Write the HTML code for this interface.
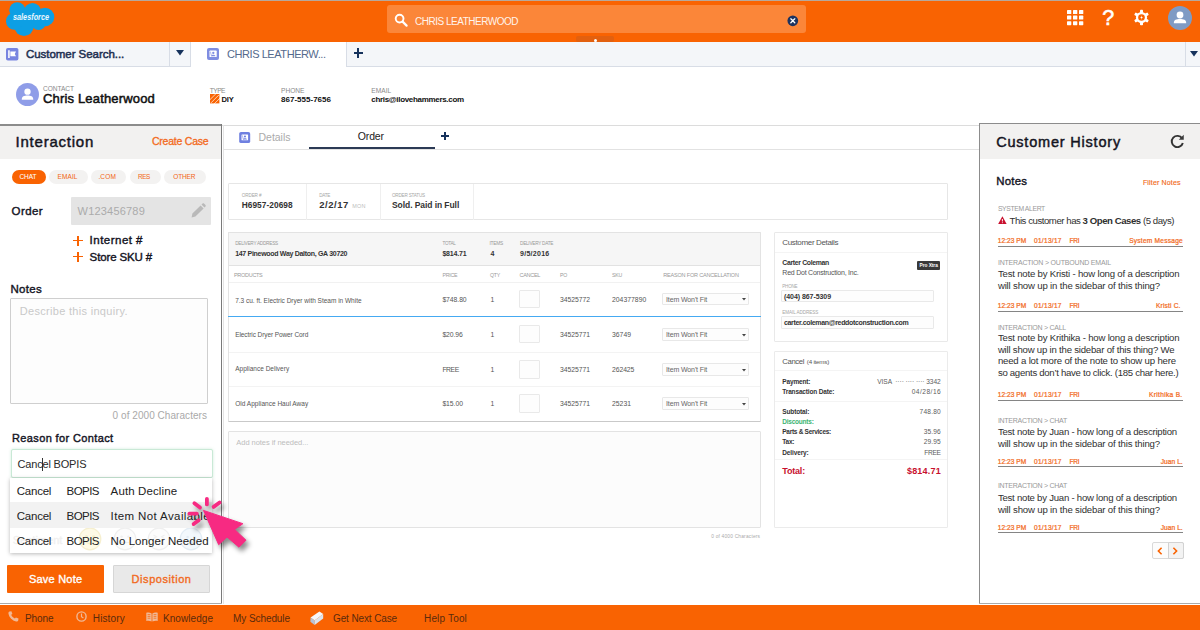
<!DOCTYPE html>
<html lang="en"><head><meta charset="utf-8"><title>Service Console - Chris Leatherwood</title>
<style>
html,body{margin:0;padding:0}
body{width:1200px;height:630px;overflow:hidden;background:#fff;position:relative;font-family:"Liberation Sans", sans-serif;}
.b{position:absolute;box-sizing:border-box}
.t{position:absolute;white-space:pre;line-height:1;font-family:"Liberation Sans", sans-serif;}
svg{position:absolute;overflow:visible}
</style></head><body>
<div class="b" style="left:0px;top:0px;width:1200px;height:42px;background:#f96302;"></div>
<div class="b" style="left:0px;top:0px;width:1200px;height:1px;background:#b7a89c;"></div>
<div class="b" style="left:387px;top:5px;width:419px;height:28px;background:#fb8639;border-radius:3px;"></div>
<div class="b" style="left:576px;top:36.2px;width:37.5px;height:6px;background:#e2600f;border-radius:2px;"></div>
<div class="b" style="left:594.2px;top:39.4px;width:2.6px;height:2.2px;background:#fff;border-radius:2px;"></div>
<svg style="left:394px;top:13px" width="14" height="14" viewBox="0 0 14 14"><circle cx="5.6" cy="5.6" r="3.9" fill="none" stroke="#fff" stroke-width="1.9"/><path d="M8.6 8.6 L12.6 12.6" stroke="#fff" stroke-width="2.2" stroke-linecap="round"/></svg>
<svg style="left:786.6px;top:14.6px" width="11.6" height="11.6" viewBox="0 0 13 13"><circle cx="6.5" cy="6.5" r="6" fill="#1d3360"/><path d="M4.3 4.3 L8.7 8.7 M8.7 4.3 L4.3 8.7" stroke="#fff" stroke-width="1.5" stroke-linecap="round"/></svg>
<svg style="left:0;top:0" width="60" height="40" viewBox="0 0 60 40"><g fill="#0d9fe4"><circle cx="17.3" cy="10.2" r="8"/><circle cx="32.5" cy="11.6" r="8.6"/><circle cx="45" cy="17" r="9.3"/><circle cx="38.5" cy="22.5" r="7.6"/><circle cx="24" cy="26.4" r="9.6"/><circle cx="14.6" cy="21.2" r="8.6"/><rect x="14" y="10" width="30" height="16"/></g><text x="13" y="20.4" font-family="Liberation Sans, sans-serif" font-size="8.6" font-style="italic" font-weight="700" fill="#eaf7ff" textLength="36" lengthAdjust="spacingAndGlyphs">salesforce</text></svg>
<svg style="left:1067px;top:10px" width="16" height="16" viewBox="0 0 16 16" fill="#fff"><rect x="0" y="0.0" width="4.3" height="4" rx="0.6"/><rect x="6" y="0.0" width="4.3" height="4" rx="0.6"/><rect x="12" y="0.0" width="4.3" height="4" rx="0.6"/><rect x="0" y="5.6" width="4.3" height="4" rx="0.6"/><rect x="6" y="5.6" width="4.3" height="4" rx="0.6"/><rect x="12" y="5.6" width="4.3" height="4" rx="0.6"/><rect x="0" y="11.2" width="4.3" height="4" rx="0.6"/><rect x="6" y="11.2" width="4.3" height="4" rx="0.6"/><rect x="12" y="11.2" width="4.3" height="4" rx="0.6"/></svg>
<svg style="left:1133.5px;top:10px" width="15" height="15" viewBox="0 0 15 15"><g fill="#fff"><rect x="6" y="-0.2" width="3" height="4" rx="0.8" transform="rotate(0 7.5 7.5)"/><rect x="6" y="-0.2" width="3" height="4" rx="0.8" transform="rotate(60 7.5 7.5)"/><rect x="6" y="-0.2" width="3" height="4" rx="0.8" transform="rotate(120 7.5 7.5)"/><rect x="6" y="-0.2" width="3" height="4" rx="0.8" transform="rotate(180 7.5 7.5)"/><rect x="6" y="-0.2" width="3" height="4" rx="0.8" transform="rotate(240 7.5 7.5)"/><rect x="6" y="-0.2" width="3" height="4" rx="0.8" transform="rotate(300 7.5 7.5)"/><circle cx="7.5" cy="7.5" r="5.6"/></g><circle cx="7.5" cy="7.5" r="3.3" fill="#f96302"/><path d="M8 5.2 L6.3 7.9 L7.5 7.9 L7 9.9 L8.8 7 L7.6 7 Z" fill="#fff"/></svg>
<svg style="left:1168px;top:5.5px" width="24" height="24" viewBox="0 0 24 24"><circle cx="12" cy="12" r="12" fill="#7f9bc4"/><circle cx="12" cy="9" r="3.4" fill="#fff"/><path d="M5.8 17.2 C5.8 13.6 8.4 12.9 12 12.9 C15.6 12.9 18.2 13.6 18.2 17.2 Z" fill="#fff"/></svg>
<div class="b" style="left:0px;top:42px;width:1200px;height:25px;background:#f4f6f9;"></div>
<div class="b" style="left:0px;top:66px;width:1200px;height:1px;background:#d8dde6;"></div>
<div class="b" style="left:168.5px;top:42px;width:1px;height:25px;background:#d8dde6;"></div>
<div class="b" style="left:190px;top:42px;width:1px;height:25px;background:#d8dde6;"></div>
<div class="b" style="left:191px;top:42px;width:155px;height:25px;background:#fff;"></div>
<div class="b" style="left:346px;top:42px;width:1px;height:25px;background:#d8dde6;"></div>
<div class="b" style="left:1184.5px;top:42px;width:1px;height:25px;background:#d8dde6;"></div>
<svg style="left:6.2px;top:48.3px" width="12.4" height="12.4" viewBox="0 0 12 12"><rect width="12" height="12" rx="1.8" fill="#7884e0"/><path d="M2.1 2.3 H3.6 V9.6 H2.1 Z M4.2 3.4 H9.7 L8.5 5.75 L9.7 8.1 H4.2 Z" fill="#fff"/></svg>
<svg style="left:176px;top:50px" width="8" height="6" viewBox="0 0 8 6"><path d="M0 0 H8 L4 5.6 Z" fill="#16325c"/></svg>
<svg style="left:1190px;top:51px" width="8" height="6" viewBox="0 0 8 6"><path d="M0 0 H8 L4 5.4 Z" fill="#16325c"/></svg>
<svg style="left:207px;top:48px" width="12" height="12" viewBox="0 0 12 12"><rect width="12" height="12" rx="2" fill="#7f8de1"/><rect x="2.5" y="2.6" width="7.2" height="6.5" rx="0.7" fill="#fff"/><circle cx="6.3" cy="4.9" r="1.15" fill="#7f8de1"/><path d="M4.2 8.3 C4.2 6.3 8.4 6.3 8.4 8.3 Z" fill="#7f8de1"/><path d="M3.4 3.6 L4.6 8.3" stroke="#7f8de1" stroke-width=".6"/></svg>
<div class="b" style="left:353.5px;top:52px;width:9.5px;height:2.4px;background:#16325c;"></div>
<div class="b" style="left:357.1px;top:48.4px;width:2.4px;height:9.5px;background:#16325c;"></div>
<svg style="left:16px;top:82.5px" width="23" height="23" viewBox="0 0 24 24"><circle cx="12" cy="12" r="12" fill="#8f9de8"/><circle cx="12" cy="9" r="3.3" fill="#fff"/><path d="M6 17.4 C6 13.8 8.6 13.1 12 13.1 C15.4 13.1 18 13.8 18 17.4 Z" fill="#fff"/></svg>
<svg style="left:210px;top:94.4px" width="9.4" height="9.4" viewBox="0 0 10 10"><rect width="10" height="10" fill="#f96302"/><path d="M-1 7 L7 -1 M1 9.5 L9.5 1 M4 11 L11 4" stroke="#fff" stroke-width="1" opacity=".75"/></svg>
<div class="b" style="left:0px;top:124px;width:222px;height:480px;background:#fff;"></div>
<div class="b" style="left:0px;top:124px;width:222px;height:35px;background:#f2f1f0;"></div>
<div class="b" style="left:0px;top:124px;width:222px;height:1.5px;background:#8c8c8c;"></div>
<div class="b" style="left:220.8px;top:124px;width:1.3px;height:480px;background:#7a7a7a;"></div>
<div class="b" style="left:222px;top:124.5px;width:757px;height:1px;background:#dcdcdc;"></div>
<div class="b" style="left:222.5px;top:125px;width:1px;height:479px;background:#e4e4e4;"></div>
<div class="b" style="left:223px;top:148.5px;width:756px;height:1px;background:#e2e2e2;"></div>
<div class="b" style="left:978.5px;top:123px;width:222px;height:481px;background:#fff;"></div>
<div class="b" style="left:978.5px;top:123px;width:222px;height:36px;background:#f2f1f0;"></div>
<div class="b" style="left:978.5px;top:123px;width:222px;height:1.3px;background:#8c8c8c;"></div>
<div class="b" style="left:978.5px;top:123px;width:1.2px;height:481px;background:#8c8c8c;"></div>
<div class="b" style="left:978.5px;top:603px;width:222px;height:1px;background:#aaa;"></div>
<div class="b" style="left:0px;top:603px;width:222px;height:1px;background:#aaa;"></div>
<div class="b" style="left:0px;top:604.8px;width:1200px;height:26px;background:#f96302;"></div>
<svg style="left:8px;top:611px" width="11" height="11" viewBox="0 0 11 11"><path d="M1.6 0.6 L3.4 0.3 L4.4 2.9 L3.2 3.8 C3.8 5.3 5.3 6.9 6.9 7.6 L7.9 6.4 L10.5 7.5 L10.2 9.4 C9.9 10.3 9 10.6 8.1 10.4 C4.2 9.5 1.2 6.4 0.5 2.7 C0.3 1.8 0.7 0.9 1.6 0.6 Z" fill="#f0b896"/></svg>
<svg style="left:76px;top:611px" width="11" height="11" viewBox="0 0 11 11"><circle cx="5.5" cy="5.5" r="4.6" fill="none" stroke="#f0b896" stroke-width="1.4"/><path d="M5.5 2.6 V5.7 L7.4 7" fill="none" stroke="#f0b896" stroke-width="1.2"/></svg>
<svg style="left:146px;top:612px" width="12" height="10" viewBox="0 0 12 10"><path d="M0.3 0.8 C2 0.2 4 0.4 5.6 1.4 V9.4 C4 8.6 2 8.4 0.3 8.9 Z M11.7 0.8 C10 0.2 8 0.4 6.4 1.4 V9.4 C8 8.6 10 8.4 11.7 8.9 Z" fill="#f0b896"/><path d="M1.6 2.6 H4.4 M1.6 4.4 H4.4 M1.6 6.2 H4.4 M7.6 2.6 H10.4 M7.6 4.4 H10.4 M7.6 6.2 H10.4" stroke="#f96302" stroke-width=".7"/></svg>
<svg style="left:309px;top:610px" width="16" height="16" viewBox="309 610 16 16"><path d="M310.6 617.6 L319.4 611.4 L323.2 614 L314.6 620.6 Z" fill="#f6f7f9"/><path d="M310.6 617.6 L314.6 620.6 L314.6 625 L310.4 621.8 Z" fill="#b5c3d4"/><path d="M314.6 620.6 L323.2 614 L323.2 618.4 L314.6 625 Z" fill="#dde4ec"/></svg>
<div class="b" style="left:11.6px;top:169.5px;width:34.4px;height:14.6px;background:#f96302;border-radius:8px;"></div>
<div class="b" style="left:49px;top:169.5px;width:39px;height:14.6px;background:#f3f2f1;border-radius:8px;"></div>
<div class="b" style="left:91.4px;top:169.5px;width:34.19999999999999px;height:14.6px;background:#f3f2f1;border-radius:8px;"></div>
<div class="b" style="left:129.6px;top:169.5px;width:31.400000000000006px;height:14.6px;background:#f3f2f1;border-radius:8px;"></div>
<div class="b" style="left:164.4px;top:169.5px;width:41.599999999999994px;height:14.6px;background:#f3f2f1;border-radius:8px;"></div>
<div class="b" style="left:71px;top:197px;width:139.5px;height:28px;background:#e4e4e4;border-radius:1px;"></div>
<svg style="left:191px;top:203px" width="15" height="15" viewBox="0 0 15 15"><path d="M0.6 14.4 L1.4 10.6 L9.6 2.4 L12.6 5.4 L4.4 13.6 Z M10.5 1.5 L11.6 0.5 C12 0.1 12.6 0.1 13 0.5 L14.5 2 C14.9 2.4 14.9 3 14.5 3.4 L13.5 4.5 Z" fill="#b9b9b9"/></svg>
<div class="b" style="left:73px;top:239.79999999999998px;width:10px;height:1.6px;background:#f96302;"></div>
<div class="b" style="left:77.2px;top:235.6px;width:1.6px;height:10px;background:#f96302;"></div>
<div class="b" style="left:73px;top:255.8px;width:10px;height:1.6px;background:#f96302;"></div>
<div class="b" style="left:77.2px;top:251.60000000000002px;width:1.6px;height:10px;background:#f96302;"></div>
<div class="b" style="left:10.2px;top:298px;width:198px;height:105.5px;background:#fdfdfd;border:1px solid #cfcfcf;border-radius:1px;"></div>
<div class="b" style="left:10.8px;top:449.4px;width:202.2px;height:28.4px;background:#fff;border:1px solid #c9e9d6;border-radius:2px;box-shadow:0 0 3px rgba(120,200,150,.35);"></div>
<div class="b" style="left:42px;top:457.5px;width:1px;height:13px;background:#333;"></div>
<div class="b" style="left:10.2px;top:477.8px;width:202.3px;height:75px;background:#fff;box-shadow:0 1px 4px rgba(0,0,0,.28);"></div>
<svg style="left:77.8px;top:526.5px" width="24" height="24" viewBox="0 0 24 24"><circle cx="12" cy="12" r="10.8" fill="#fefae6" stroke="#f6efcf" stroke-width="1.2"/><circle cx="8.4" cy="9.5" r="1.6" fill="#f6efcf"/><circle cx="15.6" cy="9.5" r="1.6" fill="#f6efcf"/><path d="M7 14 Q12 19 17 14" fill="none" stroke="#f6efcf" stroke-width="1.2"/></svg>
<svg style="left:112.7px;top:526.5px" width="24" height="24" viewBox="0 0 24 24"><circle cx="12" cy="12" r="10.8" fill="#fcfcfc" stroke="#efefef" stroke-width="1.2"/><circle cx="8.6" cy="9.6" r="1.2" fill="#efefef"/><circle cx="15.4" cy="9.6" r="1.2" fill="#efefef"/><path d="M8 15.5 H16" stroke="#efefef" stroke-width="1.2"/></svg>
<svg style="left:146.6px;top:526.5px" width="24" height="24" viewBox="0 0 24 24"><circle cx="12" cy="12" r="10.8" fill="#fcfcfc" stroke="#efefef" stroke-width="1.2"/><path d="M6.5 8 L9.5 9.8 L6.5 11.4 M17.5 8 L14.5 9.8 L17.5 11.4 M8 16.5 Q12 13.5 16 16.5" fill="none" stroke="#efefef" stroke-width="1.1"/></svg>
<svg style="left:178.7px;top:526.5px" width="24" height="24" viewBox="0 0 24 24"><circle cx="12" cy="12" r="10.8" fill="#f3f8fc" stroke="#e3ecf4" stroke-width="1.2"/><circle cx="8.6" cy="10" r="1.3" fill="#e3ecf4"/><circle cx="15.4" cy="10" r="1.3" fill="#e3ecf4"/><ellipse cx="12" cy="16" rx="2.2" ry="2.6" fill="#e3ecf4"/></svg>
<div class="b" style="left:10.2px;top:501.5px;width:202.3px;height:26px;background:#f2f2f2;"></div>
<div class="b" style="left:7.3px;top:564.6px;width:97.1px;height:28.6px;background:#f96302;border-radius:1px;"></div>
<div class="b" style="left:112.7px;top:564.6px;width:97.1px;height:28.6px;background:#e9e9e9;border:1px solid #d6d6d6;border-radius:1px;"></div>
<svg style="left:238.7px;top:131.8px" width="11.4" height="11" viewBox="0 0 12 12"><rect width="12" height="12" rx="2" fill="#6f80e0"/><rect x="2.5" y="2.6" width="7.2" height="6.5" rx="0.7" fill="#fff"/><circle cx="6.3" cy="4.9" r="1.15" fill="#6f80e0"/><path d="M4.2 8.3 C4.2 6.3 8.4 6.3 8.4 8.3 Z" fill="#6f80e0"/><path d="M3.4 3.6 L4.6 8.3" stroke="#6f80e0" stroke-width=".6"/></svg>
<div class="b" style="left:308.7px;top:147.2px;width:126px;height:2.1px;background:#2b3a55;"></div>
<div class="b" style="left:440.5px;top:135px;width:8.6px;height:2.2px;background:#16325c;"></div>
<div class="b" style="left:443.7px;top:131.8px;width:2.2px;height:8.6px;background:#16325c;"></div>
<div class="b" style="left:228.2px;top:182.7px;width:719.5px;height:37.5px;background:#fff;border:1px solid #e6e6e6;border-radius:1px;"></div>
<div class="b" style="left:306.3px;top:183.5px;width:1px;height:36px;background:#efefef;"></div>
<div class="b" style="left:379.8px;top:183.5px;width:1px;height:36px;background:#efefef;"></div>
<div class="b" style="left:473.2px;top:183.5px;width:1px;height:36px;background:#efefef;"></div>
<div class="b" style="left:228.2px;top:232px;width:533px;height:189.5px;background:#fff;border:1px solid #e3e3e3;border-radius:1px;border-bottom:1.5px solid #c9c9c9;"></div>
<div class="b" style="left:229.2px;top:233px;width:531px;height:32.5px;background:#f6f6f6;"></div>
<div class="b" style="left:229.2px;top:265px;width:531px;height:1px;background:#e2e2e2;"></div>
<div class="b" style="left:229.2px;top:282px;width:531px;height:1px;background:#f1f1f1;"></div>
<div class="b" style="left:228.2px;top:315.6px;width:533px;height:1.6px;background:#45aaf2;"></div>
<div class="b" style="left:229.2px;top:352px;width:531px;height:1px;background:#f3f3f3;"></div>
<div class="b" style="left:229.2px;top:385.8px;width:531px;height:1px;background:#f3f3f3;"></div>
<div class="b" style="left:519.3px;top:289.8px;width:21.2px;height:18.4px;background:#fdfdfd;border:1px solid #e9e9e9;border-radius:1px;"></div>
<div class="b" style="left:661.6px;top:292.6px;width:87.9px;height:12.8px;background:#fdfdfd;border:1px solid #e8e8e8;border-radius:1px;"></div>
<svg style="left:741.6px;top:298.4px" width="4" height="3" viewBox="0 0 4 3"><path d="M0 0 H4 L2 2.4 Z" fill="#444"/></svg>
<div class="b" style="left:519.3px;top:325.1px;width:21.2px;height:18.4px;background:#fdfdfd;border:1px solid #e9e9e9;border-radius:1px;"></div>
<div class="b" style="left:661.6px;top:327.90000000000003px;width:87.9px;height:12.8px;background:#fdfdfd;border:1px solid #e8e8e8;border-radius:1px;"></div>
<svg style="left:741.6px;top:333.7px" width="4" height="3" viewBox="0 0 4 3"><path d="M0 0 H4 L2 2.4 Z" fill="#444"/></svg>
<div class="b" style="left:519.3px;top:360.2px;width:21.2px;height:18.4px;background:#fdfdfd;border:1px solid #e9e9e9;border-radius:1px;"></div>
<div class="b" style="left:661.6px;top:363.0px;width:87.9px;height:12.8px;background:#fdfdfd;border:1px solid #e8e8e8;border-radius:1px;"></div>
<svg style="left:741.6px;top:368.8px" width="4" height="3" viewBox="0 0 4 3"><path d="M0 0 H4 L2 2.4 Z" fill="#444"/></svg>
<div class="b" style="left:519.3px;top:394.3px;width:21.2px;height:18.4px;background:#fdfdfd;border:1px solid #e9e9e9;border-radius:1px;"></div>
<div class="b" style="left:661.6px;top:397.1px;width:87.9px;height:12.8px;background:#fdfdfd;border:1px solid #e8e8e8;border-radius:1px;"></div>
<svg style="left:741.6px;top:402.9px" width="4" height="3" viewBox="0 0 4 3"><path d="M0 0 H4 L2 2.4 Z" fill="#444"/></svg>
<div class="b" style="left:228.2px;top:430.9px;width:532.6px;height:96.8px;background:#fcfcfc;border:1px solid #e3e3e3;border-radius:1px;"></div>
<div class="b" style="left:774.3px;top:232.2px;width:173.6px;height:110px;background:#fff;border:1px solid #e9e9e9;border-radius:1px;"></div>
<div class="b" style="left:775.3px;top:251.5px;width:171.6px;height:1px;background:#f4f4f4;"></div>
<div class="b" style="left:917px;top:260.8px;width:23.4px;height:9px;background:#3a3a3a;border-radius:1px;"></div>
<div class="b" style="left:781.3px;top:290px;width:152.5px;height:12.2px;background:#fdfdfd;border:1px solid #e9e9e9;border-radius:1px;"></div>
<div class="b" style="left:781.3px;top:316.4px;width:152.5px;height:12.2px;background:#fdfdfd;border:1px solid #e9e9e9;border-radius:1px;"></div>
<div class="b" style="left:774.3px;top:350.7px;width:173.6px;height:177px;background:#fff;border:1px solid #ebebeb;border-radius:1px;"></div>
<div class="b" style="left:775.3px;top:370px;width:171.6px;height:1px;background:#f4f4f4;"></div>
<div class="b" style="left:775.3px;top:401px;width:171.6px;height:1px;background:#f4f4f4;"></div>
<div class="b" style="left:775.3px;top:459.3px;width:171.6px;height:1px;background:#f4f4f4;"></div>
<svg style="left:1169.8px;top:133.9px" width="14.6" height="14.6" viewBox="0 0 14 14"><path d="M11.6 4.2 A5.4 5.4 0 1 0 12.3 8.6" fill="none" stroke="#333" stroke-width="1.85"/><path d="M13.2 0.8 V5.6 H8.4 Z" fill="#3a3a3a"/></svg>
<svg style="left:997.6px;top:215.6px" width="8.8" height="8.4" viewBox="0 0 10 9.5"><path d="M5 0.3 L9.8 9.2 H0.2 Z" fill="#c8102e"/><path d="M5 3.4 V6.2 M5 7.2 V8.1" stroke="#fff" stroke-width="1.1"/></svg>
<div class="b" style="left:997.8px;top:246px;width:185.4px;height:1.2px;background:#858585;"></div>
<div class="b" style="left:997.8px;top:311px;width:185.4px;height:1.2px;background:#858585;"></div>
<div class="b" style="left:997.8px;top:400px;width:185.4px;height:1.2px;background:#858585;"></div>
<div class="b" style="left:997.8px;top:466px;width:185.4px;height:1.2px;background:#858585;"></div>
<div class="b" style="left:997.8px;top:532px;width:185.4px;height:1.2px;background:#858585;"></div>
<div class="b" style="left:1152.1px;top:542.3px;width:31.5px;height:16.5px;background:#fcfcfc;border:1px solid #d9d9d9;border-radius:2px;"></div>
<div class="b" style="left:1167.5px;top:542.3px;width:16.1px;height:16.5px;background:#f3f3f3;border:1px solid #d2d2d2;border-radius:2px;border-top-left-radius:0;border-bottom-left-radius:0;"></div>
<svg style="left:1157.2px;top:547.2px" width="6" height="8" viewBox="0 0 6 8"><path d="M4.6 0.8 L1.4 4 L4.6 7.2" fill="none" stroke="#f96302" stroke-width="1.6"/></svg>
<svg style="left:1172.4px;top:547.2px" width="6" height="8" viewBox="0 0 6 8"><path d="M1.4 0.8 L4.6 4 L1.4 7.2" fill="none" stroke="#f96302" stroke-width="1.6"/></svg>
<span class="t" style="top:17px;font-size:10px;color:#fff4ec;letter-spacing:-0.489px;left:415.00px;">CHRIS LEATHERWOOD</span>
<span class="t" style="top:8px;font-size:21.5px;color:#fff;left:1102.20px;-webkit-text-stroke:0.6px #fff;">?</span>
<span class="t" style="top:49px;font-size:11.5px;color:#1f3052;letter-spacing:-0.049px;left:26.00px;-webkit-text-stroke:0.5px #1f3052;">Customer Search...</span>
<span class="t" style="top:49px;font-size:11px;color:#54698d;letter-spacing:-0.433px;left:227.00px;">CHRIS LEATHERW...</span>
<span class="t" style="top:86px;font-size:6.6px;color:#8a8a8a;letter-spacing:-0.056px;left:43.00px;">CONTACT</span>
<span class="t" style="top:92px;font-size:13px;color:#111;letter-spacing:0.169px;left:43.00px;-webkit-text-stroke:0.5px #111;">Chris Leatherwood</span>
<span class="t" style="top:88px;font-size:6.6px;color:#8a8a8a;letter-spacing:-0.509px;left:209.80px;">TYPE</span>
<span class="t" style="top:96px;font-size:7.6px;color:#111;font-weight:700;letter-spacing:-0.224px;left:221.50px;">DIY</span>
<span class="t" style="top:88px;font-size:6.6px;color:#8a8a8a;letter-spacing:-0.011px;left:281.00px;">PHONE</span>
<span class="t" style="top:96px;font-size:8px;color:#111;font-weight:700;letter-spacing:0.014px;left:281.00px;">867-555-7656</span>
<span class="t" style="top:88px;font-size:6.6px;color:#8a8a8a;letter-spacing:0.041px;left:371.30px;">EMAIL</span>
<span class="t" style="top:96px;font-size:8px;color:#111;font-weight:700;letter-spacing:-0.314px;left:371.30px;">chris@ilovehammers.com</span>
<span class="t" style="top:614px;font-size:10px;color:#5a2a0c;letter-spacing:-0.064px;left:25.00px;">Phone</span>
<span class="t" style="top:614px;font-size:10px;color:#5a2a0c;letter-spacing:0.125px;left:92.80px;">History</span>
<span class="t" style="top:614px;font-size:10px;color:#5a2a0c;letter-spacing:0.057px;left:163.00px;">Knowledge</span>
<span class="t" style="top:614px;font-size:10px;color:#5a2a0c;letter-spacing:-0.074px;left:233.00px;">My Schedule</span>
<span class="t" style="top:614px;font-size:10px;color:#5a2a0c;letter-spacing:-0.123px;left:333.00px;">Get Next Case</span>
<span class="t" style="top:614px;font-size:10px;color:#5a2a0c;letter-spacing:0.165px;left:424.00px;">Help Tool</span>
<span class="t" style="top:134px;font-size:15px;color:#14141f;letter-spacing:0.759px;left:15.60px;-webkit-text-stroke:0.45px #14141f;">Interaction</span>
<span class="t" style="top:136px;font-size:10.5px;color:#f26a21;letter-spacing:-0.232px;left:152.00px;-webkit-text-stroke:0.3px #f26a21;">Create Case</span>
<span class="t" style="top:174px;font-size:6.5px;color:#fff;letter-spacing:-0.055px;left:19.40px;-webkit-text-stroke:0.05px #fff;">CHAT</span>
<span class="t" style="top:174px;font-size:6.5px;color:#f26a21;letter-spacing:0.097px;left:57.60px;-webkit-text-stroke:0.05px #f26a21;">EMAIL</span>
<span class="t" style="top:174px;font-size:6.5px;color:#f26a21;letter-spacing:0.154px;left:98.40px;-webkit-text-stroke:0.05px #f26a21;">.COM</span>
<span class="t" style="top:174px;font-size:6.3px;color:#f26a21;letter-spacing:-0.318px;left:138.00px;-webkit-text-stroke:0.05px #f26a21;">RES</span>
<span class="t" style="top:174px;font-size:6.5px;color:#f26a21;letter-spacing:-0.110px;left:173.20px;-webkit-text-stroke:0.05px #f26a21;">OTHER</span>
<span class="t" style="top:206px;font-size:11.5px;color:#14141f;letter-spacing:0.399px;left:11.60px;-webkit-text-stroke:0.4px #14141f;">Order</span>
<span class="t" style="top:206px;font-size:11px;color:#ababab;letter-spacing:0.195px;left:77.60px;">W123456789</span>
<span class="t" style="top:235px;font-size:11.5px;color:#14141f;letter-spacing:0.481px;left:89.60px;-webkit-text-stroke:0.4px #14141f;">Internet #</span>
<span class="t" style="top:252px;font-size:11.5px;color:#14141f;letter-spacing:-0.138px;left:89.60px;-webkit-text-stroke:0.4px #14141f;">Store SKU #</span>
<span class="t" style="top:284px;font-size:11.5px;color:#14141f;letter-spacing:0.311px;left:10.40px;-webkit-text-stroke:0.4px #14141f;">Notes</span>
<span class="t" style="top:306px;font-size:11px;color:#c9c9c9;letter-spacing:0.305px;left:19.80px;">Describe this inquiry.</span>
<span class="t" style="top:411px;font-size:10px;color:#a9a9a9;letter-spacing:0.055px;right:992.94px;">0 of 2000 Characters</span>
<span class="t" style="top:433px;font-size:11px;color:#14141f;letter-spacing:0.373px;left:12.00px;-webkit-text-stroke:0.4px #14141f;">Reason for Contact</span>
<span class="t" style="top:459px;font-size:11px;color:#2a2a2a;letter-spacing:-0.177px;left:17.50px;">Cancel BOPIS</span>
<span class="t" style="top:535px;font-size:11px;color:#f0f0f0;left:12.80px;-webkit-text-stroke:0.3px #f0f0f0;">Sentiment</span>
<span class="t" style="top:486px;font-size:11.5px;color:#222;letter-spacing:-0.219px;left:16.70px;">Cancel</span>
<span class="t" style="top:486px;font-size:11.5px;color:#222;letter-spacing:-0.551px;left:66.60px;">BOPIS</span>
<span class="t" style="top:486px;font-size:11.5px;color:#222;letter-spacing:0.115px;left:110.60px;">Auth Decline</span>
<span class="t" style="top:511px;font-size:11.5px;color:#222;letter-spacing:-0.219px;left:16.70px;">Cancel</span>
<span class="t" style="top:511px;font-size:11.5px;color:#222;letter-spacing:-0.551px;left:66.60px;">BOPIS</span>
<span class="t" style="top:511px;font-size:11.5px;color:#222;letter-spacing:0.390px;left:110.60px;">Item Not Available</span>
<span class="t" style="top:536px;font-size:11.5px;color:#222;letter-spacing:-0.219px;left:16.70px;">Cancel</span>
<span class="t" style="top:536px;font-size:11.5px;color:#222;letter-spacing:-0.551px;left:66.60px;">BOPIS</span>
<span class="t" style="top:536px;font-size:11.5px;color:#222;letter-spacing:0.051px;left:110.60px;">No Longer Needed</span>
<span class="t" style="top:574px;font-size:11px;color:#fff;letter-spacing:0.225px;left:28.90px;-webkit-text-stroke:0.35px #fff;">Save Note</span>
<span class="t" style="top:574px;font-size:11px;color:#f26a21;letter-spacing:0.553px;left:131.60px;-webkit-text-stroke:0.35px #f26a21;">Disposition</span>
<span class="t" style="top:132px;font-size:10.5px;color:#ababab;letter-spacing:-0.016px;left:258.50px;">Details</span>
<span class="t" style="top:131px;font-size:10.5px;color:#222;letter-spacing:-0.109px;left:357.70px;">Order</span>
<span class="t" style="top:194px;font-size:4.6px;color:#a6a6a6;letter-spacing:-0.089px;left:241.70px;">ORDER #</span>
<span class="t" style="top:201px;font-size:8.3px;color:#333;font-weight:700;letter-spacing:0.064px;left:241.70px;">H6957-20698</span>
<span class="t" style="top:194px;font-size:4.6px;color:#a6a6a6;letter-spacing:-0.255px;left:319.20px;">DATE</span>
<span class="t" style="top:200px;font-size:9.5px;color:#333;font-weight:700;letter-spacing:0.530px;left:319.20px;">2/2/17</span>
<span class="t" style="top:204px;font-size:5.5px;color:#bdbdbd;letter-spacing:0.219px;left:352.30px;">MON</span>
<span class="t" style="top:194px;font-size:4.6px;color:#a6a6a6;letter-spacing:-0.201px;left:392.00px;">ORDER STATUS</span>
<span class="t" style="top:201px;font-size:8.5px;color:#333;font-weight:700;letter-spacing:-0.071px;left:392.00px;">Sold. Paid in Full</span>
<span class="t" style="top:242px;font-size:4.7px;color:#999;letter-spacing:-0.252px;left:235.20px;">DELIVERY ADDRESS</span>
<span class="t" style="top:250px;font-size:7px;color:#333;font-weight:700;letter-spacing:-0.304px;left:235.20px;">147 Pinewood Way Dalton, GA 30720</span>
<span class="t" style="top:242px;font-size:4.6px;color:#999;letter-spacing:-0.218px;left:442.40px;">TOTAL</span>
<span class="t" style="top:250px;font-size:7px;color:#333;font-weight:700;letter-spacing:-0.159px;left:442.40px;">$814.71</span>
<span class="t" style="top:242px;font-size:4.8px;color:#999;letter-spacing:-0.234px;left:489.50px;">ITEMS</span>
<span class="t" style="top:250px;font-size:7px;color:#333;font-weight:700;left:490.50px;">4</span>
<span class="t" style="top:242px;font-size:4.7px;color:#999;letter-spacing:-0.249px;left:520.00px;">DELIVERY DATE</span>
<span class="t" style="top:250px;font-size:7px;color:#333;font-weight:700;letter-spacing:0.281px;left:520.00px;">9/5/2016</span>
<span class="t" style="top:273px;font-size:5.5px;color:#9a9a9a;letter-spacing:-0.297px;left:234.00px;">PRODUCTS</span>
<span class="t" style="top:273px;font-size:5.3px;color:#9a9a9a;letter-spacing:-0.261px;left:442.40px;">PRICE</span>
<span class="t" style="top:273px;font-size:5.2px;color:#9a9a9a;letter-spacing:-0.224px;left:490.00px;">QTY</span>
<span class="t" style="top:273px;font-size:5.5px;color:#9a9a9a;letter-spacing:-0.302px;left:519.50px;">CANCEL</span>
<span class="t" style="top:273px;font-size:5.2px;color:#9a9a9a;letter-spacing:-0.250px;left:560.00px;">PO</span>
<span class="t" style="top:273px;font-size:5.2px;color:#9a9a9a;letter-spacing:-0.224px;left:612.00px;">SKU</span>
<span class="t" style="top:273px;font-size:5.5px;color:#9a9a9a;letter-spacing:-0.181px;left:663.25px;">REASON FOR CANCELLATION</span>
<span class="t" style="top:298px;font-size:6.5px;color:#555;letter-spacing:-0.009px;left:235.20px;">7.3 cu. ft. Electric Dryer with Steam in White</span>
<span class="t" style="top:297px;font-size:6.8px;color:#555;letter-spacing:-0.054px;left:442.40px;">$748.80</span>
<span class="t" style="top:297px;font-size:6.8px;color:#555;left:490.50px;">1</span>
<span class="t" style="top:297px;font-size:6.8px;color:#555;letter-spacing:-0.031px;left:560.00px;">34525772</span>
<span class="t" style="top:297px;font-size:6.8px;color:#555;letter-spacing:0.024px;left:612.00px;">204377890</span>
<span class="t" style="top:296px;font-size:7px;color:#666;letter-spacing:-0.116px;left:666.00px;">Item Won't Fit</span>
<span class="t" style="top:332px;font-size:6.5px;color:#555;letter-spacing:-0.086px;left:235.20px;">Electric Dryer Power Cord</span>
<span class="t" style="top:332px;font-size:6.8px;color:#555;letter-spacing:-0.083px;left:442.40px;">$20.96</span>
<span class="t" style="top:332px;font-size:6.8px;color:#555;left:490.50px;">1</span>
<span class="t" style="top:332px;font-size:6.8px;color:#555;letter-spacing:-0.031px;left:560.00px;">34525771</span>
<span class="t" style="top:332px;font-size:6.8px;color:#555;letter-spacing:0.019px;left:612.00px;">36749</span>
<span class="t" style="top:331px;font-size:7px;color:#666;letter-spacing:-0.116px;left:666.00px;">Item Won't Fit</span>
<span class="t" style="top:366px;font-size:6.5px;color:#555;letter-spacing:0.009px;left:235.20px;">Appliance Delivery</span>
<span class="t" style="top:367px;font-size:6.8px;color:#555;letter-spacing:-0.450px;left:442.40px;">FREE</span>
<span class="t" style="top:367px;font-size:6.8px;color:#555;left:490.50px;">1</span>
<span class="t" style="top:367px;font-size:6.8px;color:#555;letter-spacing:-0.031px;left:560.00px;">34525771</span>
<span class="t" style="top:367px;font-size:6.8px;color:#555;letter-spacing:-0.065px;left:612.00px;">262425</span>
<span class="t" style="top:366px;font-size:7px;color:#666;letter-spacing:-0.116px;left:666.00px;">Item Won't Fit</span>
<span class="t" style="top:401px;font-size:6.5px;color:#555;letter-spacing:0.021px;left:235.20px;">Old Appliance Haul Away</span>
<span class="t" style="top:401px;font-size:6.8px;color:#555;letter-spacing:-0.049px;left:442.40px;">$15.00</span>
<span class="t" style="top:401px;font-size:6.8px;color:#555;left:490.50px;">1</span>
<span class="t" style="top:401px;font-size:6.8px;color:#555;letter-spacing:-0.031px;left:560.00px;">34525771</span>
<span class="t" style="top:401px;font-size:6.8px;color:#555;letter-spacing:0.019px;left:612.00px;">25231</span>
<span class="t" style="top:400px;font-size:7px;color:#666;letter-spacing:-0.116px;left:666.00px;">Item Won't Fit</span>
<span class="t" style="top:439px;font-size:7.5px;color:#bcbcbc;letter-spacing:-0.045px;left:236.30px;">Add notes if needed...</span>
<span class="t" style="top:535px;font-size:4.8px;color:#aaa;letter-spacing:0.209px;right:439.79px;">0 of 4000 Characters</span>
<span class="t" style="top:239px;font-size:8px;color:#555;letter-spacing:-0.347px;left:782.30px;">Customer Details</span>
<span class="t" style="top:260px;font-size:6.9px;color:#333;font-weight:700;letter-spacing:-0.331px;left:782.30px;">Carter Coleman</span>
<span class="t" style="top:269px;font-size:7px;color:#555;letter-spacing:-0.227px;left:782.30px;">Red Dot Construction, Inc.</span>
<span class="t" style="top:264px;font-size:4.8px;color:#fff;font-weight:700;letter-spacing:-0.059px;left:919.60px;">Pro Xtra</span>
<span class="t" style="top:285px;font-size:4.5px;color:#a6a6a6;letter-spacing:-0.203px;left:782.30px;">PHONE</span>
<span class="t" style="top:293px;font-size:7px;color:#333;font-weight:700;letter-spacing:-0.062px;left:784.00px;">(404) 867-5309</span>
<span class="t" style="top:311px;font-size:4.6px;color:#a6a6a6;letter-spacing:-0.066px;left:782.30px;">EMAIL ADDRESS</span>
<span class="t" style="top:319px;font-size:7px;color:#333;font-weight:700;letter-spacing:-0.336px;left:784.00px;">carter.coleman@reddotconstruction.com</span>
<span class="t" style="top:358px;font-size:7.7px;color:#555;letter-spacing:-0.373px;left:782.30px;">Cancel</span>
<span class="t" style="top:359px;font-size:6.2px;color:#555;letter-spacing:-0.209px;left:806.80px;">(4 items)</span>
<span class="t" style="top:379px;font-size:6.5px;color:#333;font-weight:700;letter-spacing:-0.158px;left:782.30px;">Payment:</span>
<span class="t" style="top:379px;font-size:6.6px;color:#5c5c5c;letter-spacing:-0.058px;right:259.36px;">VISA  ···· ···· ···· 3342</span>
<span class="t" style="top:389px;font-size:6.5px;color:#333;font-weight:700;letter-spacing:-0.150px;left:782.30px;">Transaction Date:</span>
<span class="t" style="top:389px;font-size:6.6px;color:#5c5c5c;letter-spacing:0.479px;right:258.82px;">04/28/16</span>
<span class="t" style="top:409px;font-size:6.5px;color:#333;font-weight:700;letter-spacing:-0.130px;left:782.30px;">Subtotal:</span>
<span class="t" style="top:409px;font-size:6.6px;color:#5c5c5c;letter-spacing:0.188px;right:259.11px;">748.80</span>
<span class="t" style="top:419px;font-size:6.5px;color:#3cb371;font-weight:700;letter-spacing:-0.229px;left:782.30px;">Discounts:</span>
<span class="t" style="top:429px;font-size:6.5px;color:#333;font-weight:700;letter-spacing:-0.281px;left:782.30px;">Parts &amp; Services:</span>
<span class="t" style="top:429px;font-size:6.6px;color:#5c5c5c;letter-spacing:0.097px;right:259.20px;">35.96</span>
<span class="t" style="top:439px;font-size:6.5px;color:#333;font-weight:700;letter-spacing:-0.223px;left:782.30px;">Tax:</span>
<span class="t" style="top:439px;font-size:6.6px;color:#5c5c5c;letter-spacing:0.097px;right:259.20px;">29.95</span>
<span class="t" style="top:450px;font-size:6.5px;color:#333;font-weight:700;letter-spacing:-0.130px;left:782.30px;">Delivery:</span>
<span class="t" style="top:450px;font-size:6.6px;color:#5c5c5c;letter-spacing:-0.300px;right:259.40px;">FREE</span>
<span class="t" style="top:467px;font-size:9px;color:#c8102e;font-weight:700;letter-spacing:-0.188px;left:782.30px;">Total:</span>
<span class="t" style="top:467px;font-size:9px;color:#c8102e;font-weight:700;letter-spacing:0.208px;right:259.09px;">$814.71</span>
<span class="t" style="top:135px;font-size:14.5px;color:#14141f;letter-spacing:0.800px;left:996.20px;-webkit-text-stroke:0.45px #14141f;">Customer History</span>
<span class="t" style="top:176px;font-size:11.4px;color:#14141f;letter-spacing:0.247px;left:996.20px;-webkit-text-stroke:0.4px #14141f;">Notes</span>
<span class="t" style="top:179px;font-size:7px;color:#f26a21;letter-spacing:0.167px;left:1142.90px;-webkit-text-stroke:0.15px #f26a21;">Filter Notes</span>
<span class="t" style="top:206px;font-size:6.8px;color:#999;letter-spacing:-0.354px;left:997.90px;">SYSTEM ALERT</span>
<span class="t" style="top:216px;font-size:9.6px;color:#303030;letter-spacing:-0.447px;left:1009.60px;">This customer has <b>3 Open Cases</b> (5 days)</span>
<span class="t" style="top:238px;font-size:6.6px;color:#f26a21;letter-spacing:0.021px;left:997.80px;-webkit-text-stroke:0.22px #f26a21;">12:23 PM</span>
<span class="t" style="top:238px;font-size:6.6px;color:#f26a21;letter-spacing:0.266px;left:1034.00px;-webkit-text-stroke:0.22px #f26a21;">01/13/17</span>
<span class="t" style="top:238px;font-size:6.6px;color:#f26a21;letter-spacing:-0.300px;left:1069.60px;-webkit-text-stroke:0.22px #f26a21;">FRI</span>
<span class="t" style="top:238px;font-size:6.6px;color:#f26a21;letter-spacing:0.230px;right:17.07px;-webkit-text-stroke:0.22px #f26a21;">System Message</span>
<span class="t" style="top:259px;font-size:7px;color:#999;letter-spacing:-0.194px;left:997.90px;">INTERACTION &gt; OUTBOUND EMAIL</span>
<span class="t" style="top:269px;font-size:9.6px;color:#303030;letter-spacing:-0.189px;left:997.90px;">Test note by Kristi - how long of a description</span>
<span class="t" style="top:281px;font-size:9.6px;color:#303030;letter-spacing:-0.168px;left:997.90px;">will show up in the sidebar of this thing?</span>
<span class="t" style="top:303px;font-size:6.6px;color:#f26a21;letter-spacing:0.021px;left:997.80px;-webkit-text-stroke:0.22px #f26a21;">12:23 PM</span>
<span class="t" style="top:303px;font-size:6.6px;color:#f26a21;letter-spacing:0.266px;left:1034.00px;-webkit-text-stroke:0.22px #f26a21;">01/13/17</span>
<span class="t" style="top:303px;font-size:6.6px;color:#f26a21;letter-spacing:-0.300px;left:1069.60px;-webkit-text-stroke:0.22px #f26a21;">FRI</span>
<span class="t" style="top:303px;font-size:6.6px;color:#f26a21;letter-spacing:0.158px;right:19.44px;-webkit-text-stroke:0.22px #f26a21;">Kristi C.</span>
<span class="t" style="top:324px;font-size:7px;color:#999;letter-spacing:-0.274px;left:997.90px;">INTERACTION &gt; CALL</span>
<span class="t" style="top:333px;font-size:9.6px;color:#303030;letter-spacing:-0.193px;left:997.90px;">Test note by Krithika - how long a description</span>
<span class="t" style="top:345px;font-size:9.6px;color:#303030;letter-spacing:-0.210px;left:997.90px;">will show up in the sidebar of this thing? We</span>
<span class="t" style="top:356px;font-size:9.6px;color:#303030;letter-spacing:-0.177px;left:997.90px;">need a lot more of the note to show up here</span>
<span class="t" style="top:368px;font-size:9.6px;color:#303030;letter-spacing:-0.290px;left:997.90px;">so agents don’t have to click. (185 char here.)</span>
<span class="t" style="top:392px;font-size:6.6px;color:#f26a21;letter-spacing:0.021px;left:997.80px;-webkit-text-stroke:0.22px #f26a21;">12:23 PM</span>
<span class="t" style="top:392px;font-size:6.6px;color:#f26a21;letter-spacing:0.266px;left:1034.00px;-webkit-text-stroke:0.22px #f26a21;">01/13/17</span>
<span class="t" style="top:392px;font-size:6.6px;color:#f26a21;letter-spacing:-0.300px;left:1069.60px;-webkit-text-stroke:0.22px #f26a21;">FRI</span>
<span class="t" style="top:392px;font-size:6.6px;color:#f26a21;letter-spacing:0.312px;right:17.49px;-webkit-text-stroke:0.22px #f26a21;">Krithika B.</span>
<span class="t" style="top:417px;font-size:7px;color:#999;letter-spacing:-0.276px;left:997.90px;">INTERACTION &gt; CHAT</span>
<span class="t" style="top:427px;font-size:9.6px;color:#303030;letter-spacing:-0.241px;left:997.90px;">Test note by Juan - how long of a description</span>
<span class="t" style="top:439px;font-size:9.6px;color:#303030;letter-spacing:-0.168px;left:997.90px;">will show up in the sidebar of this thing?</span>
<span class="t" style="top:459px;font-size:6.6px;color:#f26a21;letter-spacing:0.021px;left:997.80px;-webkit-text-stroke:0.22px #f26a21;">12:23 PM</span>
<span class="t" style="top:459px;font-size:6.6px;color:#f26a21;letter-spacing:0.266px;left:1034.00px;-webkit-text-stroke:0.22px #f26a21;">01/13/17</span>
<span class="t" style="top:459px;font-size:6.6px;color:#f26a21;letter-spacing:-0.300px;left:1069.60px;-webkit-text-stroke:0.22px #f26a21;">FRI</span>
<span class="t" style="top:459px;font-size:6.6px;color:#f26a21;letter-spacing:0.051px;right:17.25px;-webkit-text-stroke:0.22px #f26a21;">Juan L.</span>
<span class="t" style="top:482px;font-size:7px;color:#999;letter-spacing:-0.276px;left:997.90px;">INTERACTION &gt; CHAT</span>
<span class="t" style="top:493px;font-size:9.6px;color:#303030;letter-spacing:-0.241px;left:997.90px;">Test note by Juan - how long of a description</span>
<span class="t" style="top:505px;font-size:9.6px;color:#303030;letter-spacing:-0.168px;left:997.90px;">will show up in the sidebar of this thing?</span>
<span class="t" style="top:525px;font-size:6.6px;color:#f26a21;letter-spacing:0.021px;left:997.80px;-webkit-text-stroke:0.22px #f26a21;">12:23 PM</span>
<span class="t" style="top:525px;font-size:6.6px;color:#f26a21;letter-spacing:0.266px;left:1034.00px;-webkit-text-stroke:0.22px #f26a21;">01/13/17</span>
<span class="t" style="top:525px;font-size:6.6px;color:#f26a21;letter-spacing:-0.300px;left:1069.60px;-webkit-text-stroke:0.22px #f26a21;">FRI</span>
<span class="t" style="top:525px;font-size:6.6px;color:#f26a21;letter-spacing:0.051px;right:17.25px;-webkit-text-stroke:0.22px #f26a21;">Juan L.</span>
<svg style="left:180px;top:485px;filter:drop-shadow(3.5px 4.5px 2.5px rgba(0,0,0,.45))" width="80" height="80" viewBox="180 485 80 80">
<path d="M203.5 510.4 L242.9 523.7 L234.6 529.4 L246 540.2 L239 547.2 L227 537 L218.7 544.7 Z" fill="#f72a82" stroke="#f72a82" stroke-width="1" stroke-linejoin="round"/>
<g stroke="#f72a82" stroke-width="3.8" stroke-linecap="round">
<path d="M206.9 498.8 V504.4"/><path d="M194.4 503.2 L200 507.6"/><path d="M219.6 502.5 L213.6 506.9"/><path d="M189.4 513.6 H196.8"/><path d="M193.6 524.1 L198.7 520.2"/>
</g></svg>
</body></html>
